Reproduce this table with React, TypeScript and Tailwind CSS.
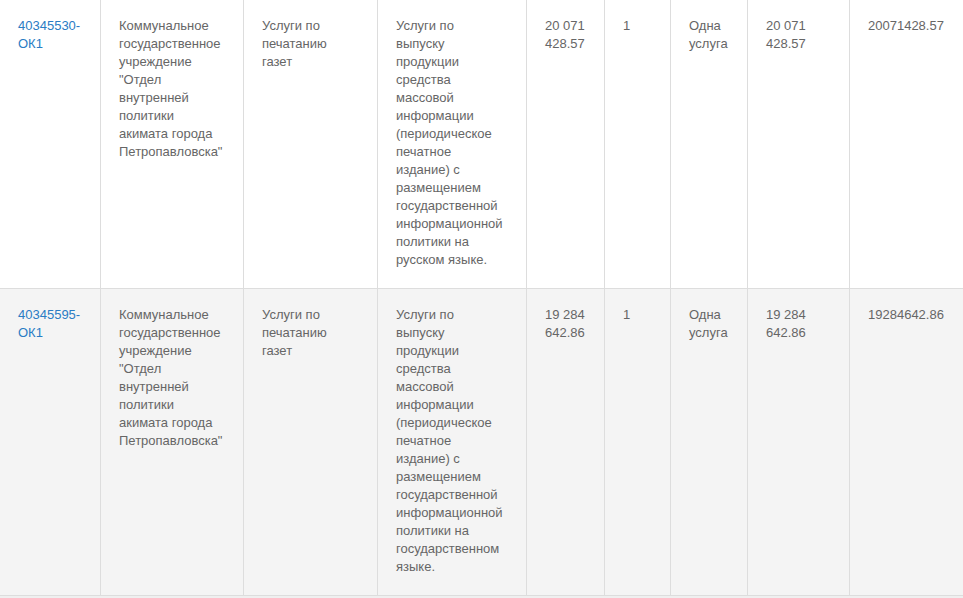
import React from "react";

type Row = {
  id: string;
  customer: string;
  name: string;
  desc: string;
  price: string;
  qty: string;
  unit: string;
  sum: string;
  total: string;
};

const rows: Row[] = [
  {
    id: "40345530-ОК1",
    customer:
      'Коммунальное государственное учреждение "Отдел внутренней политики акимата города Петропавловска"',
    name: "Услуги по печатанию газет",
    desc:
      "Услуги по выпуску продукции средства массовой информации (периодическое печатное издание) с размещением государственной информационной политики на русском языке.",
    price: "20 071 428.57",
    qty: "1",
    unit: "Одна услуга",
    sum: "20 071 428.57",
    total: "20071428.57",
  },
  {
    id: "40345595-ОК1",
    customer:
      'Коммунальное государственное учреждение "Отдел внутренней политики акимата города Петропавловска"',
    name: "Услуги по печатанию газет",
    desc:
      "Услуги по выпуску продукции средства массовой информации (периодическое печатное издание) с размещением государственной информационной политики на государственном языке.",
    price: "19 284 642.86",
    qty: "1",
    unit: "Одна услуга",
    sum: "19 284 642.86",
    total: "19284642.86",
  },
];

function TableRow({ r, odd }: { r: Row; odd: boolean }) {
  const cell = "border-l border-[#dddddd] pl-[18px] pt-[17px] pb-[19px]";
  return (
    <div
      className={`flex border-t border-[#dddddd] ${odd ? "bg-[#f4f4f4]" : "bg-white"}`}
    >
      <div className="w-[100px] shrink-0 pl-[18px] pr-[14px] pt-[17px] pb-[19px]">
        <a href="#" className="text-[#2a7cc4]">
          {r.id.replace("-", "-\u200B")}
        </a>
      </div>
      <div className={`w-[143px] shrink-0 pr-[18px] ${cell}`}>{r.customer}</div>
      <div className={`w-[134px] shrink-0 pr-[18px] ${cell}`}>{r.name}</div>
      <div className={`w-[149px] shrink-0 pr-[22px] ${cell}`}>{r.desc}</div>
      <div className={`w-[78px] shrink-0 pr-[14px] ${cell}`}>{r.price}</div>
      <div className={`w-[66px] shrink-0 pr-[14px] ${cell}`}>{r.qty}</div>
      <div className={`w-[77px] shrink-0 pr-[14px] ${cell}`}>{r.unit}</div>
      <div className={`w-[102px] shrink-0 pr-[18px] ${cell}`}>{r.sum}</div>
      <div className={`flex-1 pr-[14px] ${cell}`}>{r.total}</div>
    </div>
  );
}

export default function App() {
  return (
    <div
      className="w-[963px] h-[598px] overflow-hidden bg-[#efefef] text-[13px] leading-[18px] text-[#666666]"
      style={{ fontFamily: '"Liberation Sans", Arial, sans-serif' }}
    >
      <div className="-mt-px border-b border-[#dddddd]">
        {rows.map((r, i) => (
          <TableRow key={r.id} r={r} odd={i % 2 === 1} />
        ))}
      </div>
    </div>
  );
}
